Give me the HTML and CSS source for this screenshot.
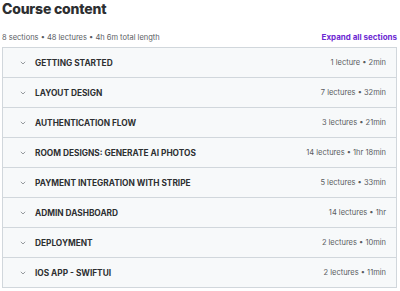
FILE: index.html
```html
<!DOCTYPE html>
<html>
<head>
<meta charset="utf-8">
<link rel="stylesheet" href="styles.css">
</head>
<body>
<div class="page">
  <h2 class="title">Course content</h2>
  <div class="meta">
    <span class="summary">8 sections • 48 lectures • 4h 6m total length</span>
    <span class="expand">Expand all sections</span>
  </div>
  <div class="list">
    <div class="row"><span class="chev"><svg width="6" height="4" viewBox="0 0 6 4"><path d="M0.8 0.8 L3 3 L5.2 0.8" fill="none" stroke="#8a8f93" stroke-width="0.9"/></svg></span><span class="name">GETTING STARTED</span><span class="info">1 lecture • 2min</span></div>
    <div class="row"><span class="chev"><svg width="6" height="4" viewBox="0 0 6 4"><path d="M0.8 0.8 L3 3 L5.2 0.8" fill="none" stroke="#8a8f93" stroke-width="0.9"/></svg></span><span class="name">LAYOUT DESIGN</span><span class="info">7 lectures • 32min</span></div>
    <div class="row"><span class="chev"><svg width="6" height="4" viewBox="0 0 6 4"><path d="M0.8 0.8 L3 3 L5.2 0.8" fill="none" stroke="#8a8f93" stroke-width="0.9"/></svg></span><span class="name">AUTHENTICATION FLOW</span><span class="info">3 lectures • 21min</span></div>
    <div class="row"><span class="chev"><svg width="6" height="4" viewBox="0 0 6 4"><path d="M0.8 0.8 L3 3 L5.2 0.8" fill="none" stroke="#8a8f93" stroke-width="0.9"/></svg></span><span class="name">ROOM DESIGNS: GENERATE AI PHOTOS</span><span class="info">14 lectures • 1hr 18min</span></div>
    <div class="row"><span class="chev"><svg width="6" height="4" viewBox="0 0 6 4"><path d="M0.8 0.8 L3 3 L5.2 0.8" fill="none" stroke="#8a8f93" stroke-width="0.9"/></svg></span><span class="name">PAYMENT INTEGRATION WITH STRIPE</span><span class="info">5 lectures • 33min</span></div>
    <div class="row"><span class="chev"><svg width="6" height="4" viewBox="0 0 6 4"><path d="M0.8 0.8 L3 3 L5.2 0.8" fill="none" stroke="#8a8f93" stroke-width="0.9"/></svg></span><span class="name">ADMIN DASHBOARD</span><span class="info">14 lectures • 1hr</span></div>
    <div class="row"><span class="chev"><svg width="6" height="4" viewBox="0 0 6 4"><path d="M0.8 0.8 L3 3 L5.2 0.8" fill="none" stroke="#8a8f93" stroke-width="0.9"/></svg></span><span class="name">DEPLOYMENT</span><span class="info">2 lectures • 10min</span></div>
    <div class="row"><span class="chev"><svg width="6" height="4" viewBox="0 0 6 4"><path d="M0.8 0.8 L3 3 L5.2 0.8" fill="none" stroke="#8a8f93" stroke-width="0.9"/></svg></span><span class="name">IOS APP - SWIFTUI</span><span class="info">2 lectures • 11min</span></div>
  </div>
</div>
</body>
</html>
```
FILE: styles.css
```css
* { box-sizing: border-box; }
body { margin: 0; background: #fff; font-family: Inter, "Noto Sans", sans-serif; color: #2d2f31; }
.page { padding: 0 3px 0 2px; }
.title { margin: 0; font-size: 14px; font-weight: 800; line-height: 18px; letter-spacing: -0.2px; }
.meta { display: flex; justify-content: space-between; align-items: center; margin-top: 13px; height: 12px; }
.summary { font-size: 7.5px; color: #595c5f; }
.expand { font-size: 8px; font-weight: 700; color: #6d28d2; }
.list { margin-top: 4px; border: 1px solid #d1d7dc; border-bottom: 0; }
.row { display: flex; align-items: center; height: 30px; background: #f7f9fa; border-bottom: 1px solid #d1d7dc; padding: 0 10px 0 17px; }
.chev { display: flex; width: 15px; }
.name { font-size: 8.3px; font-weight: 700; flex: 1; }
.info { font-size: 7.5px; color: #595c5f; }
```
